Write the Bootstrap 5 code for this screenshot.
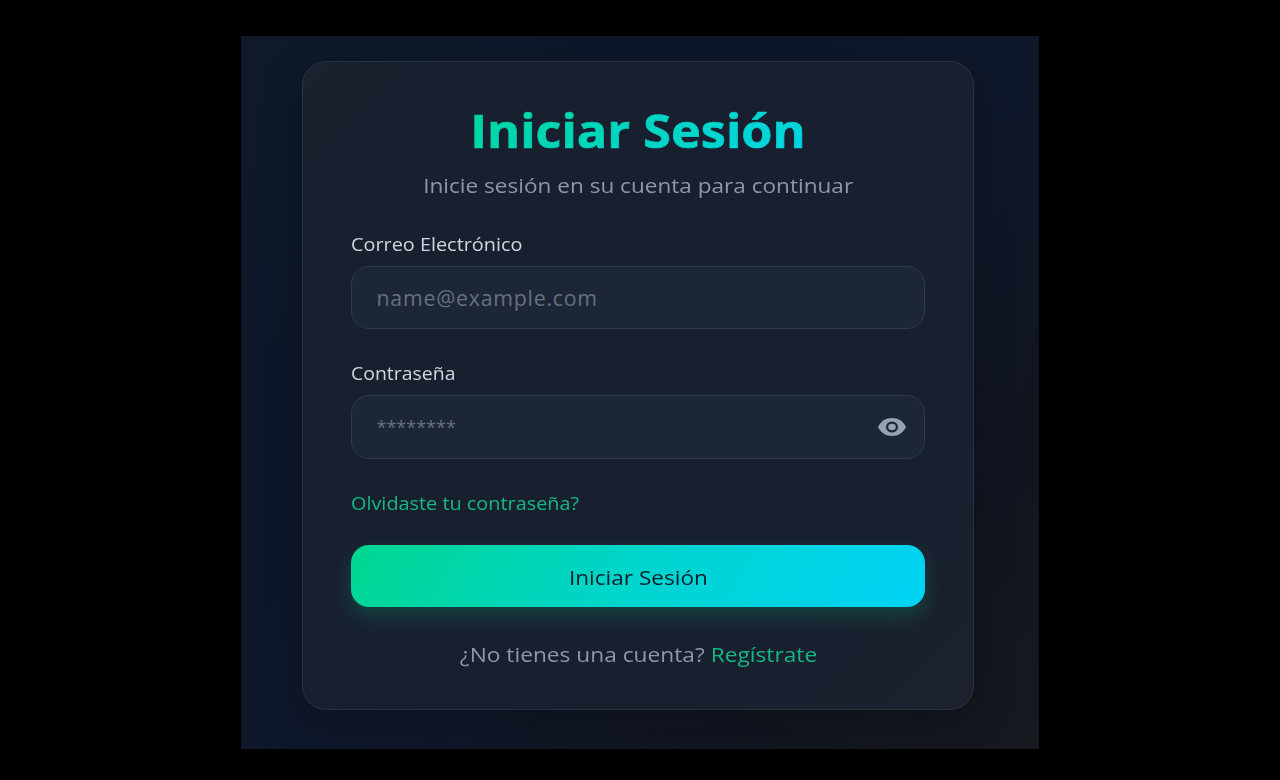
<!DOCTYPE html>
<html lang="es">
<head>
<meta charset="utf-8">
<meta name="viewport" content="width=device-width, initial-scale=1">
<title>Iniciar Sesión</title>
<link href="https://cdn.jsdelivr.net/npm/bootstrap@5.3.0/dist/css/bootstrap.min.css" rel="stylesheet">
<style>
body{background:#000;font-family:"Open Sans","Noto Sans",sans-serif;font-size:20px;overflow:hidden}
.stage{width:798px;height:713px;margin:36px 0 0 241px;padding:25px 0 0 61px;overflow:hidden;
  background:linear-gradient(135deg,#0f1928 0%,#0e172a 28%,#0f172a 55%,#11151f 80%,#16191e 100%)}
.login-card{width:672px;height:649px;padding:40px 48px;border-radius:24px;border:1px solid #29313f;
  background:linear-gradient(135deg,#1a222e 0%,#182030 14%,#182030 78%,#1c212d 100%);
  box-shadow:0 10px 40px rgba(0,0,0,.22)}
.wide{display:inline-block;white-space:nowrap;transform:scaleX(1.113)}
.wide-start{transform-origin:left center;transform:scaleX(1.103)}
.wide-short{transform:scaleX(1.08)}
.title{font-size:46px;line-height:56px;font-weight:700;margin:0}
.title .wide{transform:scaleX(1.096);background:linear-gradient(135deg,#00d69f,#00d5e3);-webkit-background-clip:text;background-clip:text;color:transparent;-webkit-text-stroke:.7px transparent}
.subtitle{font-size:20.3px;line-height:30px;margin:12px 0 0;color:#8f97a6}
.field-label{font-size:18px;line-height:24px;margin:32px 0 10px;color:#d1d5db}
.form-control.field{height:63px;padding:0 24px 0 24.5px;border:1px solid #2d3a49;border-radius:18px;background:#1c2635;color:#d1d5db;
  font-size:21.3px;letter-spacing:.77px}
.form-control.field::placeholder{color:#667080;opacity:1}
.form-control.password{height:64px;font-size:18px;letter-spacing:0;padding-bottom:1px}
.eye{right:18px;top:22px;width:30px;height:20px;padding:0;border:0;background:none;color:#98a1af;line-height:0}
.forgot{font-size:18px;line-height:24px;margin-top:32px}
.accent{color:#14b883;text-decoration:none}
.submit{height:62px;margin-top:30px;border:0;border-radius:18px;padding:2px 0 0;color:#0f1f2c;font-size:20.3px;
  background:linear-gradient(120deg,#00d68f,#00d5d0 52%,#00d2f5);box-shadow:0 9px 20px rgba(0,214,143,.2)}
.submit:hover{color:#0f1f2c}
.signup{font-size:20.3px;line-height:30px;margin:32px 0 0;padding-left:1px;color:#8f97a6}
.signup .wide{transform:scaleX(1.12)}
</style>
</head>
<body>
<main class="stage">
  <form class="login-card d-flex flex-column">
    <h1 class="title text-center"><span class="wide">Iniciar Sesión</span></h1>
    <p class="subtitle text-center"><span class="wide">Inicie sesión en su cuenta para continuar</span></p>
    <label class="field-label" for="email"><span class="wide wide-start">Correo Electrónico</span></label>
    <input class="form-control field" id="email" type="email" placeholder="name@example.com">
    <label class="field-label" for="password"><span class="wide wide-start wide-short">Contraseña</span></label>
    <div class="position-relative">
      <input class="form-control field password" id="password" type="password" placeholder="********">
      <button class="eye position-absolute" type="button" aria-label="Mostrar contraseña">
        <svg width="30" height="20" viewBox="0 0 30 20" fill="none">
          <path d="M1 10C3.700 4.300 8.800 1 15 1s11.300 3.300 14 9c-2.700 5.700-7.800 9-14 9S3.700 15.700 1 10Z" fill="currentColor"/>
          <ellipse cx="15" cy="10" rx="4.900" ry="4.400" stroke="#1c2635" stroke-width="2.200"/>
        </svg>
      </button>
    </div>
    <div class="forgot"><a class="accent wide wide-start" href="#">Olvidaste tu contraseña?</a></div>
    <button class="btn submit w-100" type="button"><span class="wide">Iniciar Sesión</span></button>
    <p class="signup text-center"><span class="wide">¿No tienes una cuenta? <a class="accent" href="#">Regístrate</a></span></p>
  </form>
</main>
<script src="https://cdn.jsdelivr.net/npm/bootstrap@5.3.0/dist/js/bootstrap.bundle.min.js"></script>
</body>
</html>
